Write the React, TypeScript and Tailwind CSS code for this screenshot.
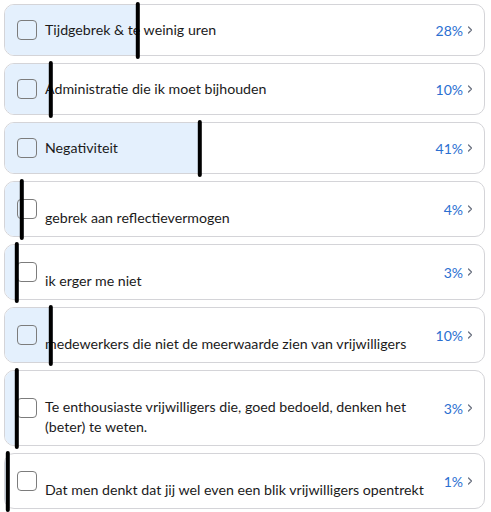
import { ChevronRight } from "lucide-react";

type Option = { label: string; pct: number; shifted?: boolean };

const options: Option[] = [
  { label: "Tijdgebrek & te weinig uren", pct: 28 },
  { label: "Administratie die ik moet bijhouden", pct: 10 },
  { label: "Negativiteit", pct: 41 },
  { label: "gebrek aan reflectievermogen", pct: 4, shifted: true },
  { label: "ik erger me niet", pct: 3, shifted: true },
  { label: "medewerkers die niet de meerwaarde zien van vrijwilligers", pct: 10, shifted: true },
  { label: "Te enthousiaste vrijwilligers die, goed bedoeld, denken het (beter) te weten.", pct: 3, shifted: true },
  { label: "Dat men denkt dat jij wel even een blik vrijwilligers opentrekt", pct: 1, shifted: true },
];

function OptionRow({ option }: { option: Option }) {
  return (
    <div className="relative">
      <div className="relative flex min-h-[52px] items-center overflow-hidden rounded-[10px] border border-[#d4d4d8] bg-white py-2 pl-3 pr-2">
        <div
          className="absolute inset-y-0 left-0 bg-[#e4f0fd]"
          style={{ width: `${option.pct}%` }}
        />
        <div className="relative h-5 w-5 shrink-0 rounded-[4px] border border-[#7c7c7c]" />
        <div
          className={`relative ml-2 flex-1 pr-3 text-[14.2px] leading-[20px] text-[#1b1b1b] ${option.shifted ? "pt-[18px]" : ""}`}
        >
          {option.label}
        </div>
        <div className="relative flex items-center text-[14px] text-[#2b6fd1]">
          {option.pct}%
          <ChevronRight className="ml-[1px] h-3 w-3 text-[#6b7280]" strokeWidth={2.5} />
        </div>
      </div>
      <div
        className="absolute top-[-2px] bottom-[-3px] w-1 -translate-x-[80%] rounded-full bg-black"
        style={{ left: `${option.pct}%` }}
      />
    </div>
  );
}

export default function App() {
  return (
    <div
      className="flex min-h-screen flex-col gap-[7px] bg-white pb-1 pl-1 pr-[6px] pt-1"
      style={{ fontFamily: 'Lato, "Noto Sans", sans-serif' }}
    >
      {options.map((o) => (
        <OptionRow key={o.label} option={o} />
      ))}
    </div>
  );
}
